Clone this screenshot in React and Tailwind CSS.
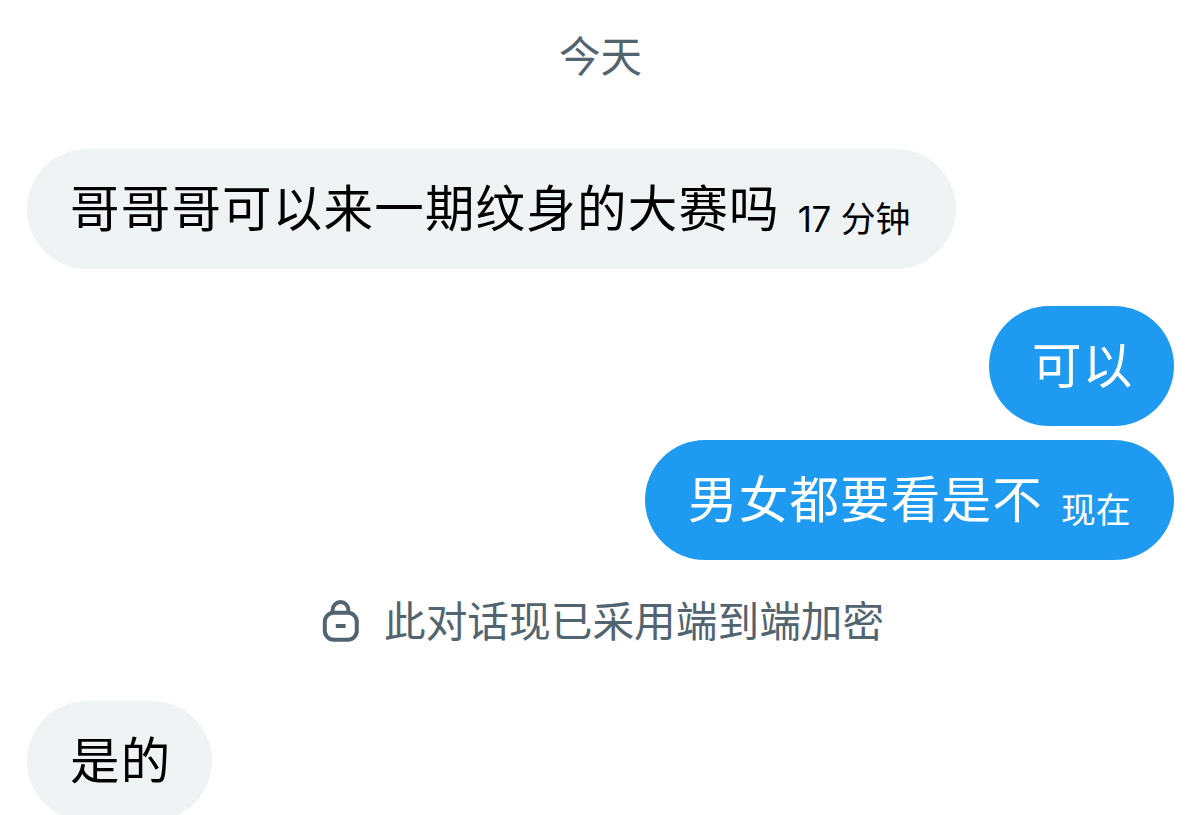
function Bubble({ children, time, className = "" }) {
  return (
    <div className={`flex h-[120px] shrink-0 items-center rounded-full pl-[43px] ${className}`}>
      <span className="mt-[2px] text-[49.5px] leading-none tracking-[1.2px]">{children}</span>
      {time && <span className="mt-[20px] ml-[18px] text-[34.8px] leading-none">{time}</span>}
    </div>
  );
}

function LockIcon() {
  return (
    <svg width="38" height="44" viewBox="0 0 38 44" fill="none" stroke="#536471" strokeWidth="4" className="shrink-0">
      <rect x="2.8" y="12.7" width="32" height="27" rx="9" />
      <path d="M10.6 13.5V10a7.9 7.9 0 0 1 15.8 0v3.5M13.8 26h9.8" />
    </svg>
  );
}

export default function App() {
  return (
    <main
      className='flex h-[815px] w-[1200px] flex-col overflow-hidden bg-white pr-[26px] pl-[27px] font-["Inter","Noto_Sans_CJK_SC",sans-serif] font-normal whitespace-nowrap'
      lang="zh-CN"
    >
      <div className="mt-[37px] flex h-[42px] shrink-0 items-center justify-center text-[41.5px] leading-none text-[#536471]">今天</div>
      <Bubble
        className="mt-[70px] w-[929px] self-start bg-[#eff3f4] text-black"
        time={
          <>
            <span className="tracking-[-0.5px]">17</span>
            <span className="ml-[10px]">分钟</span>
          </>
        }
      >
        哥哥哥可以来一期纹身的大赛吗
      </Bubble>
      <Bubble className="mt-[37px] w-[185px] self-end bg-[#1e9bf0] text-white">可以</Bubble>
      <Bubble className="mt-[14px] w-[529px] self-end bg-[#1e9bf0] text-white" time="现在">
        男女都要看是不
      </Bubble>
      <div className="mt-[40px] ml-[295px] flex h-[44px] shrink-0 items-center gap-[24px] text-[#536471]">
        <LockIcon />
        <span className="mt-[2px] text-[41.7px] leading-none">此对话现已采用端到端加密</span>
      </div>
      <Bubble className="mt-[57px] w-[185px] self-start bg-[#eff3f4] text-black">是的</Bubble>
    </main>
  );
}
